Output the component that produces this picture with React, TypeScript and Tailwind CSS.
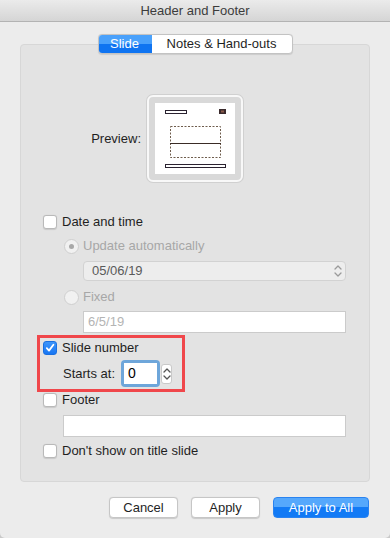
import React from "react"

function Checkbox({ checked = false }: { checked?: boolean }) {
  if (checked) {
    return (
      <div className="w-[14px] h-[14px] rounded-[3px] bg-gradient-to-b from-[#3d95fa] to-[#1776f3] border border-[#1a6fe0] flex items-center justify-center">
        <svg width="10" height="10" viewBox="0 0 10 10">
          <path d="M1.8 5.2 L4 7.6 L8.4 1.8" fill="none" stroke="white" strokeWidth="1.8" strokeLinecap="round" strokeLinejoin="round" />
        </svg>
      </div>
    )
  }
  return <div className="w-[14px] h-[14px] rounded-[3px] bg-white border border-[#b9b9b9] shadow-[0_0.5px_1px_rgba(0,0,0,0.12)]" />
}

function Radio({ selected = false }: { selected?: boolean }) {
  return (
    <div className="w-[15px] h-[15px] rounded-full bg-[#f1f1f1] border border-[#cfcfcf] flex items-center justify-center">
      {selected && <div className="w-[5px] h-[5px] rounded-full bg-[#a8a8a8]" />}
    </div>
  )
}

function UpDown({ color = "#8a8a8a" }: { color?: string }) {
  return (
    <svg width="8" height="14" viewBox="0 0 8 14">
      <path d="M1 5 L4 2 L7 5" fill="none" stroke={color} strokeWidth="1.3" strokeLinecap="round" strokeLinejoin="round" />
      <path d="M1 9 L4 12 L7 9" fill="none" stroke={color} strokeWidth="1.3" strokeLinecap="round" strokeLinejoin="round" />
    </svg>
  )
}

function SlidePreview() {
  return (
    <div className="w-[96px] h-[87px] rounded-[6px] border-2 border-[#f8f8f8] bg-[#d9d9d9] p-[6px] shadow-[0_0_0_1px_#d0d0d0]">
      <svg width="80" height="71" viewBox="0 0 80 71" className="block bg-white">
        <rect x="10.5" y="7.5" width="21" height="3" fill="white" stroke="#2a2230" strokeWidth="1" />
        <rect x="64" y="6" width="7" height="5" fill="#3a2a2c" />
        <rect x="66" y="7.5" width="3" height="2" fill="#8a5a4a" />
        <rect x="15.5" y="23.5" width="50" height="31" fill="none" stroke="#6e5c4c" strokeWidth="1" strokeDasharray="2 1.5" />
        <line x1="15" y1="40.5" x2="66" y2="40.5" stroke="#3a2c26" strokeWidth="1" />
        <rect x="10.5" y="61.5" width="60" height="3" fill="white" stroke="#2a2230" strokeWidth="1" />
      </svg>
    </div>
  )
}

export default function App() {
  return (
    <div className="w-[390px] h-[538px] bg-[#c9c9c9] font-['Liberation_Sans',Arial,sans-serif] text-[13px] text-[#1f1f1f]">
      <div className="w-full h-full bg-[#ececec] rounded-b-[5px] flex flex-col overflow-hidden">
        {/* title bar */}
        <div className="h-[22px] shrink-0 bg-gradient-to-b from-[#ebebeb] to-[#d5d5d5] border-b border-[#b3b3b3] flex items-center justify-center text-[#3c3c3c]">
          Header and Footer
        </div>

        {/* tabs */}
        <div className="mt-[12px] h-[20px] flex justify-center relative z-10">
          <div className="flex h-[20px] rounded-[4px] border border-[#c3c3c3] bg-white shadow-[0_0.5px_1px_rgba(0,0,0,0.1)] overflow-hidden">
            <div className="w-[54px] -my-px -ml-px bg-gradient-to-b from-[#4aa1fb] from-50% to-[#0f74f1] to-50% text-white flex items-center justify-center rounded-l-[4px]">Slide</div>
            <div className="w-[140px] flex items-center justify-center">Notes &amp; Hand-outs</div>
          </div>
        </div>

        {/* group box */}
        <div className="mx-[20px] -mt-[10px] h-[438px] rounded-[4px] bg-[#e3e3e3] border border-[#d7d7d7] flex flex-col pl-[22px] pt-[50px]">
          <div className="grid grid-cols-[1fr_auto_1fr] items-center -ml-[22px]">
            <div className="justify-self-end mr-[6px]">Preview:</div>
            <SlidePreview />
            <div />
          </div>

          <div className="mt-[30px] h-[20px] flex items-center gap-[5px]">
            <Checkbox />
            <span>Date and time</span>
          </div>
          <div className="mt-[4px] h-[20px] flex items-center gap-[4px] pl-[21px] text-[#a7a7a7]">
            <Radio selected />
            <span>Update automatically</span>
          </div>
          <div className="mt-[5px] ml-[40px] w-[263px] h-[20px] rounded-[4px] bg-[#ededed] border border-[#d2d2d2] flex items-center justify-between pl-[8px] pr-[3px] text-[#5a5a5a]">
            <span>05/06/19</span>
            <UpDown color="#9a9a9a" />
          </div>
          <div className="mt-[6px] h-[20px] flex items-center gap-[4px] pl-[21px] text-[#a7a7a7]">
            <Radio />
            <span>Fixed</span>
          </div>
          <div className="mt-[4px] ml-[40px] w-[263px] h-[22px] bg-white border border-[#cbcbcb] flex items-center pl-[4px] text-[#b4b4b4]">
            6/5/19
          </div>

          <div className="relative mt-[5px]">
            <div className="h-[20px] flex items-center gap-[5px]">
              <Checkbox checked />
              <span>Slide number</span>
            </div>
            <div className="mt-[2px] h-[27px] flex items-center pl-[20px]">
              <span>Starts at:</span>
              <div className="ml-[6px] w-[39px] h-[27px] rounded-[4px] bg-[#6ea6da] p-[3px]">
                <div className="w-full h-full bg-white flex items-center pl-[4px] text-[14px] text-black">0</div>
              </div>
              <div className="ml-[1px] w-[11px] h-[20px] rounded-[3px] bg-white border border-[#c9c9c9] flex items-center justify-center">
                <UpDown color="#555" />
              </div>
            </div>
            {/* annotation */}
            <div className="absolute -top-[3px] -left-[6px] w-[148px] h-[57px] border-[3px] border-[#f0474b] pointer-events-none" />
          </div>

          <div className="mt-[3px] h-[20px] flex items-center gap-[5px]">
            <Checkbox />
            <span>Footer</span>
          </div>
          <div className="mt-[5px] ml-[20px] w-[283px] h-[22px] bg-white border border-[#cbcbcb]" />
          <div className="mt-[4px] h-[20px] flex items-center gap-[5px]">
            <Checkbox />
            <span>Don't show on title slide</span>
          </div>
        </div>

        {/* buttons */}
        <div className="mt-[15px] flex justify-end gap-[13px] pr-[21px]">
          <button className="w-[69px] h-[21px] rounded-[4px] bg-white border border-[#c6c6c6] shadow-[0_0.5px_1px_rgba(0,0,0,0.15)] text-[#1f1f1f]">Cancel</button>
          <button className="w-[69px] h-[21px] rounded-[4px] bg-white border border-[#c6c6c6] shadow-[0_0.5px_1px_rgba(0,0,0,0.15)] text-[#1f1f1f]">Apply</button>
          <button className="w-[96px] h-[21px] rounded-[4px] bg-gradient-to-b from-[#55a8fc] from-50% to-[#127af5] to-50% border border-[#2a83f0] text-white">Apply to All</button>
        </div>
      </div>
    </div>
  )
}
